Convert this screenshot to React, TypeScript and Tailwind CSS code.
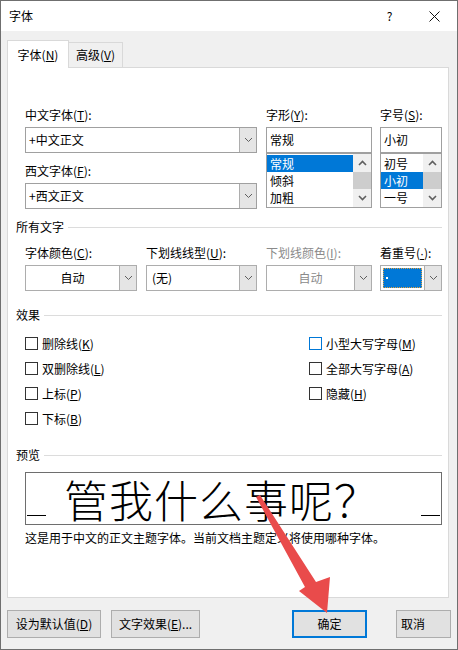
import type { ReactNode } from "react";

const ui = "font-['Microsoft_YaHei_UI','Noto_Sans_CJK_SC',sans-serif]";

function Chevron({ up }: { up?: boolean }) {
  return (
    <svg width="9" height="6" viewBox="0 0 9 6">
      <path
        d={up ? "M1 5 L4.5 1.5 L8 5" : "M1 1 L4.5 4.5 L8 1"}
        fill="none"
        stroke="#5f5f5f"
        strokeWidth={up ? 1.6 : 1}
      />
    </svg>
  );
}

function DropButton() {
  return (
    <div className="w-[17px] h-full flex items-center justify-center bg-[#e5e5e5] border-l border-[#adadad] shrink-0">
      <Chevron />
    </div>
  );
}

function Heading({ title }: { title: string }) {
  return (
    <div className="flex items-center h-[16px]">
      <span>{title}</span>
      <div className="ml-[4px] h-px flex-1 bg-[#dcdcdc]" />
    </div>
  );
}

function Check({ label, focus }: { label: ReactNode; focus?: boolean }) {
  return (
    <div className="h-[25px] flex items-center">
      <div
        className={`w-[13px] h-[13px] bg-white border ${focus ? "border-[#0078d7]" : "border-[#333333]"}`}
      />
      <span className="ml-[4px]">{label}</span>
    </div>
  );
}

function ListBox({ items, sel, className }: { items: string[]; sel: number; className: string }) {
  return (
    <div className={`h-[55px] flex border border-[#a0a0a0] bg-white ${className}`}>
      <div className="flex-1 pt-px">
        {items.map((t, i) => (
          <div
            key={t}
            className={`h-[17px] leading-[17px] pl-[3px] ${i === sel ? "bg-[#0078d7] text-white" : ""}`}
          >
            {t}
          </div>
        ))}
      </div>
      <div className="w-[18px] flex flex-col bg-[#f0f0f0]">
        <div className="h-[18px] flex items-center justify-center">
          <Chevron up />
        </div>
        <div className="h-[17px] bg-[#cdcdcd]" />
        <div className="h-[18px] flex items-center justify-center">
          <svg width="9" height="6" viewBox="0 0 9 6">
            <path d="M1 1 L4.5 4.5 L8 1" fill="none" stroke="#5f5f5f" strokeWidth={1.6} />
          </svg>
        </div>
      </div>
    </div>
  );
}

function Button({ children, className }: { children: ReactNode; className: string }) {
  return (
    <div className={`h-[28px] flex items-center justify-center bg-[#e1e1e1] ${className}`}>
      {children}
    </div>
  );
}

export default function App() {
  return (
    <div
      className={`relative w-[458px] h-[650px] border border-[#6f6f6f] bg-[#f0f0f0] text-[12px] leading-[16px] text-black overflow-hidden ${ui}`}
    >
      {/* title bar */}
      <div className="h-[30px] bg-white flex items-center">
        <span className="pl-[8px] flex-1">字体</span>
        <div className="w-[45px] h-full flex items-center justify-center">?</div>
        <div className="w-[45px] h-full flex items-center justify-center">
          <svg width="11" height="11" viewBox="0 0 11 11">
            <path d="M0.5 0.5 L10.5 10.5 M10.5 0.5 L0.5 10.5" stroke="#111" strokeWidth="1" />
          </svg>
        </div>
      </div>

      {/* tabs */}
      <div className="mt-[9px] h-[27px] flex items-end pl-[6px]">
        <div className="relative z-10 -mb-px h-[28px] w-[62px] bg-white border border-b-0 border-[#d9d9d9] flex items-center justify-center">
          字体(<u>N</u>)
        </div>
        <div className="h-[25px] w-[54px] border border-l-0 border-b-0 border-[#d9d9d9] flex items-center justify-center">
          高级(<u>V</u>)
        </div>
      </div>

      {/* panel */}
      <div className="ml-[6px] w-[442px] h-[531px] border border-[#d9d9d9] bg-white pt-[39px] pl-[8px] pr-[6px]">
        <div className="pl-[9px] flex">
          <div className="w-[232px] flex flex-col">
            <div className="h-[16px]">
              中文字体(<u>T</u>):
            </div>
            <div className="mt-[4px] h-[26px] flex border border-[#a0a0a0] bg-white">
              <div className="flex-1 pl-[3px] flex items-center">+中文正文</div>
              <DropButton />
            </div>
            <div className="mt-[10px] h-[16px]">
              西文字体(<u>F</u>):
            </div>
            <div className="mt-[4px] h-[26px] flex border border-[#a0a0a0] bg-white">
              <div className="flex-1 pl-[3px] flex items-center">+西文正文</div>
              <DropButton />
            </div>
          </div>
          <div className="ml-[9px] w-[106px] flex flex-col">
            <div className="h-[16px]">
              字形(<u>Y</u>):
            </div>
            <div className="mt-[4px] h-[26px] border border-[#a0a0a0] pl-[3px] flex items-center">常规</div>
            <ListBox items={["常规", "倾斜", "加粗"]} sel={0} className="w-[106px]" />
          </div>
          <div className="ml-[8px] w-[62px] flex flex-col">
            <div className="h-[16px]">
              字号(<u>S</u>):
            </div>
            <div className="mt-[4px] h-[26px] border border-[#a0a0a0] pl-[3px] flex items-center">小初</div>
            <ListBox items={["初号", "小初", "一号"]} sel={1} className="w-[62px]" />
          </div>
        </div>

        <div className="mt-[10px]">
          <Heading title="所有文字" />
        </div>
        <div className="pl-[9px] mt-[10px] flex">
          <div className="w-[112px] flex flex-col">
            <div className="h-[16px]">
              字体颜色(<u>C</u>):
            </div>
            <div className="mt-[4px] h-[26px] flex border border-[#adadad] bg-white">
              <div className="flex-1 flex items-center justify-center">自动</div>
              <DropButton />
            </div>
          </div>
          <div className="ml-[9px] w-[111px] flex flex-col">
            <div className="h-[16px] whitespace-nowrap">
              下划线线型(<u>U</u>):
            </div>
            <div className="mt-[4px] h-[26px] flex border border-[#adadad] bg-white">
              <div className="flex-1 pl-[5px] flex items-center">(无)</div>
              <DropButton />
            </div>
          </div>
          <div className="ml-[9px] w-[106px] flex flex-col">
            <div className="h-[16px] whitespace-nowrap text-[#8a8a8a]">
              下划线颜色(<u>I</u>):
            </div>
            <div className="mt-[4px] h-[26px] flex border border-[#adadad] bg-white">
              <div className="flex-1 flex items-center justify-center text-[#8a8a8a]">自动</div>
              <DropButton />
            </div>
          </div>
          <div className="ml-[8px] w-[62px] flex flex-col">
            <div className="h-[16px] whitespace-nowrap">
              着重号(<u className="font-['Liberation_Sans',sans-serif]">·</u>):
            </div>
            <div className="mt-[4px] h-[26px] flex border border-[#adadad] bg-white">
              <div className="flex-1 p-[2px] flex">
                <div className="flex-1 bg-[#0078d7] border border-dotted border-[#e0a040] flex items-center pl-[2px]">
                  <div className="w-[2px] h-[2px] bg-white" />
                </div>
              </div>
              <DropButton />
            </div>
          </div>
        </div>

        <div className="mt-[16px]">
          <Heading title="效果" />
        </div>
        <div className="pl-[9px] mt-[8px] flex">
          <div className="w-[284px] flex flex-col">
            <Check label={<>删除线(<u>K</u>)</>} />
            <Check label={<>双删除线(<u>L</u>)</>} />
            <Check label={<>上标(<u>P</u>)</>} />
            <Check label={<>下标(<u>B</u>)</>} />
          </div>
          <div className="flex flex-col">
            <Check focus label={<>小型大写字母(<u>M</u>)</>} />
            <Check label={<>全部大写字母(<u>A</u>)</>} />
            <Check label={<>隐藏(<u>H</u>)</>} />
          </div>
        </div>

        <div className="mt-[16px]">
          <Heading title="预览" />
        </div>
        <div className="pl-[9px] mt-[9px]">
          <div className="h-[53px] border border-[#6e6e6e] flex">
            <div className="ml-[1px] mb-[8px] w-[19px] h-px bg-black self-end" />
            <span className="ml-[18px] self-center text-[44px] leading-[44px] font-light tracking-[1px]">
              管我什么事呢？
            </span>
            <div className="ml-auto mr-[1px] mb-[8px] w-[19px] h-px bg-black self-end" />
          </div>
          <div className="mt-[5px] h-[16px]">这是用于中文的正文主题字体。当前文档主题定义将使用哪种字体。</div>
        </div>
      </div>

      {/* buttons */}
      <div className="mt-[12px] pl-[6px] flex">
        <Button className="w-[94px] border border-[#adadad]">
          设为默认值(<u>D</u>)
        </Button>
        <Button className="ml-[10px] w-[89px] border border-[#adadad]">
          文字效果(<u>E</u>)...
        </Button>
        <Button className="ml-[92px] w-[75px] border-2 border-[#0078d7]">确定</Button>
        <Button className="ml-[29px] w-[55px] border border-[#adadad] !justify-start pl-[4px]">取消</Button>
      </div>

      {/* annotation arrow */}
      <svg
        className="absolute left-[-1px] top-[-1px] pointer-events-none"
        width="458"
        height="650"
        viewBox="0 0 458 650"
      >
        <polygon
          points="256,497 260,495 316,582 330,577 327,613 299,591 305,587"
          fill="#e94b4b"
        />
      </svg>
    </div>
  );
}
